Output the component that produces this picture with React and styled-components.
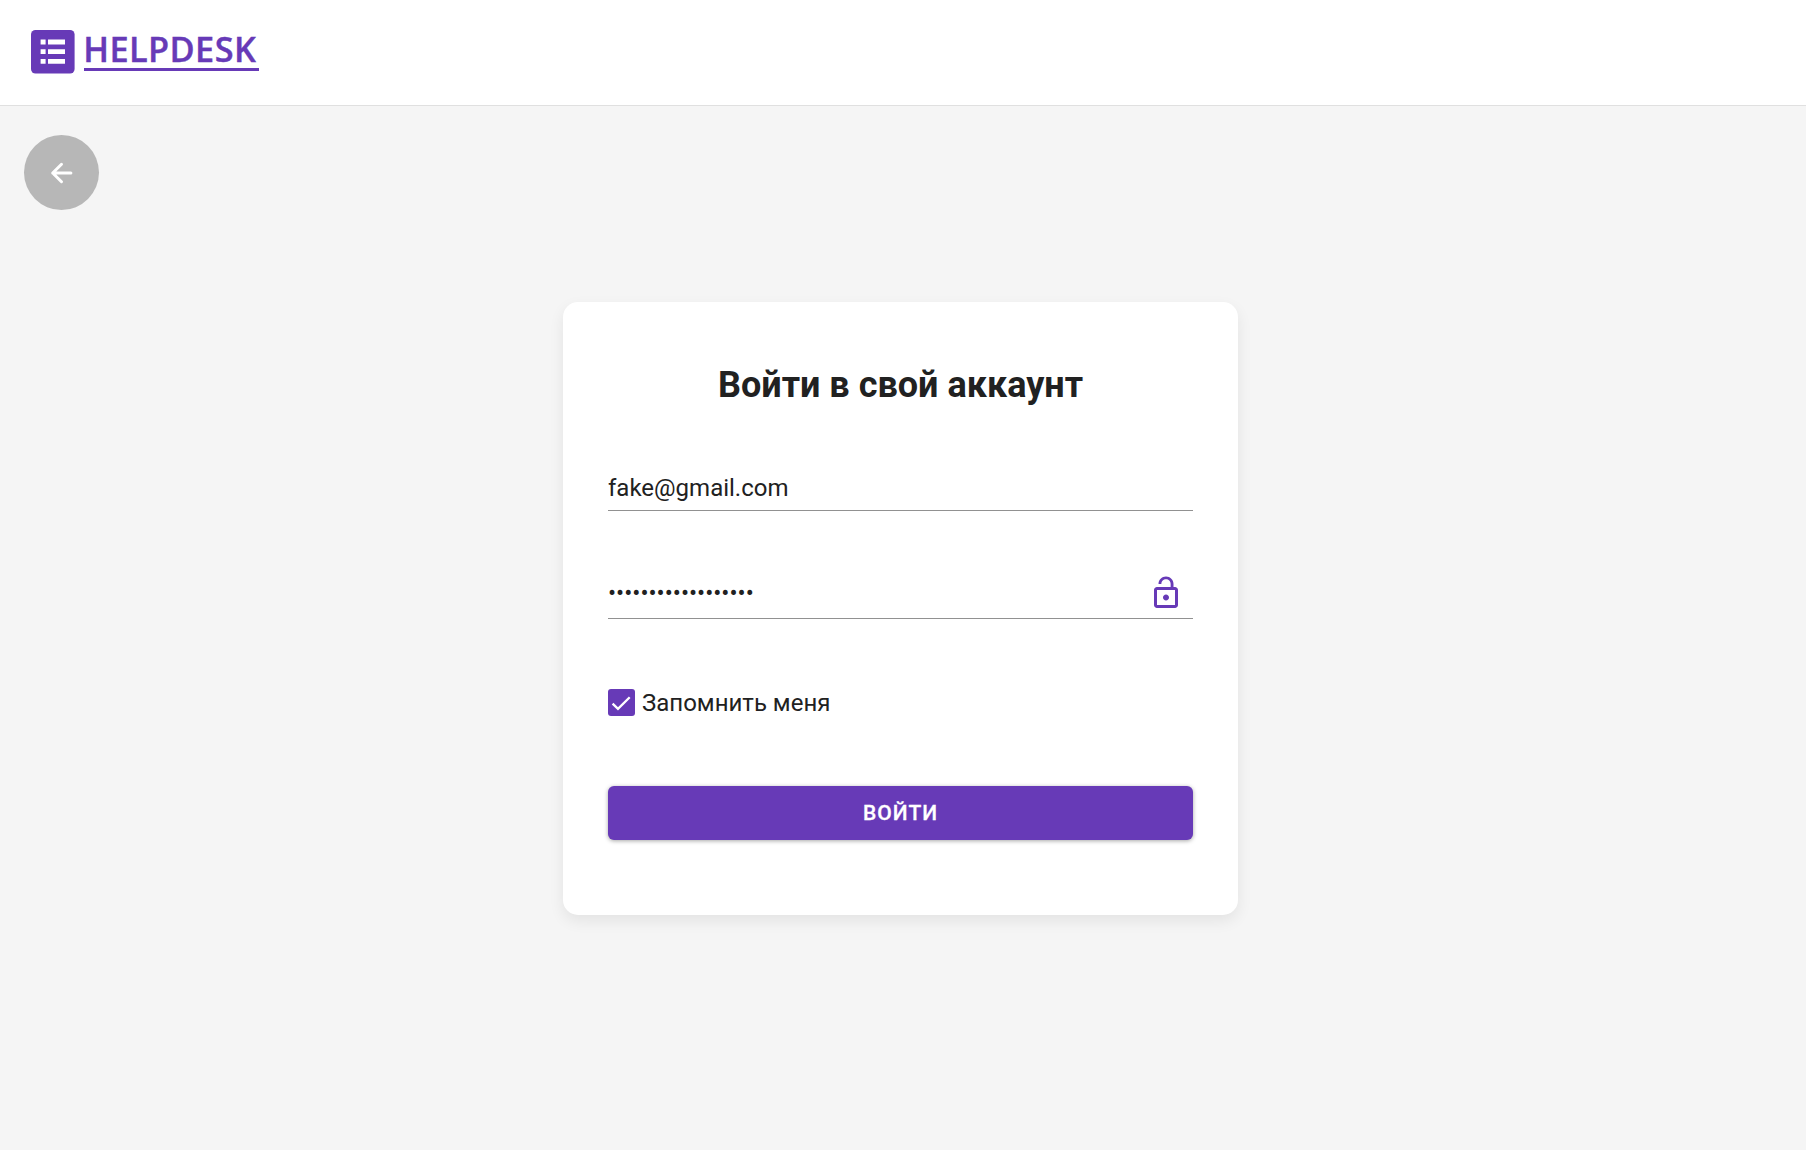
import React, { useState } from "react";
import styled, { createGlobalStyle } from "styled-components";

const PURPLE = "#673ab7";
const INK = "#212121";

const GlobalStyle = createGlobalStyle`
  *, *::before, *::after { box-sizing: border-box; }
  body {
    margin: 0;
    background: #f5f5f5;
    color: ${INK};
    font-family: Roboto, "Liberation Sans", sans-serif;
  }
`;

const Page = styled.div`
  min-height: 100vh;
  display: flex;
  flex-direction: column;
`;

const Header = styled.header`
  height: 106px;
  padding: 30px 31px 0;
  background: #fff;
  border-bottom: 1px solid #e0e0e0;
`;

const Logo = styled.a`
  display: inline-flex;
  align-items: flex-start;
  gap: 9px;
  color: ${PURPLE};
  text-decoration: none;
`;

const LogoText = styled.span`
  width: 175px;
  height: 41px;
  border-bottom: 3px solid ${PURPLE};
  font: 600 34.3px/38px "Open Sans", "Noto Sans", sans-serif;
  letter-spacing: 0.4px;
  text-indent: -0.7px;
  -webkit-text-stroke: 0.4px ${PURPLE};
  white-space: nowrap;
`;

const Main = styled.main`
  flex: 1;
  display: flex;
  flex-direction: column;
  padding: 29px 24px 0;
`;

const BackButton = styled.button`
  width: 75px;
  height: 75px;
  padding: 0;
  border: 0;
  border-radius: 50%;
  background: #b7b7b7;
  display: grid;
  place-items: center;
`;

const Card = styled.form`
  width: 675px;
  height: 613px;
  margin: 92px 0 0 539px;
  padding: 60px 45px 0;
  display: flex;
  flex-direction: column;
  background: #fff;
  border-radius: 15px;
  box-shadow: 0 6px 15px rgba(0, 0, 0, 0.075);
`;

const Title = styled.h1`
  margin: 0;
  padding-top: 2px;
  font-size: 36px;
  line-height: 42px;
  height: 44px;
  font-weight: 700;
  text-align: center;
`;

const Field = styled.div`
  display: flex;
  align-items: center;
  height: ${(p) => p.$height}px;
  margin-top: ${(p) => p.$gap}px;
  padding-top: ${(p) => p.$inset || 0}px;
  border-bottom: 1px solid #919191;
`;

const Input = styled.input`
  flex: 1;
  min-width: 0;
  padding: 0;
  border: 0;
  outline: 0;
  background: none;
  color: ${INK};
  font: 400 24px/30px Roboto, sans-serif;
`;

const LockButton = styled.button`
  width: 36px;
  height: 36px;
  margin: 0 9px 0 0;
  padding: 0;
  border: 0;
  background: none;
  color: ${PURPLE};
  svg { display: block; }
`;

const Remember = styled.label`
  display: flex;
  align-items: center;
  gap: 7px;
  height: 27px;
  margin-top: 70px;
  font-size: 24px;
`;

const CheckMark = styled.span`
  width: 27px;
  height: 27px;
  border-radius: 3px;
  background: ${PURPLE};
`;

const Submit = styled.button`
  height: 54px;
  margin-top: 70px;
  padding: 0;
  border: 0;
  border-radius: 6px;
  background: ${PURPLE};
  color: #fff;
  font: 500 21px/54px Roboto, sans-serif;
  letter-spacing: 1px;
  -webkit-text-stroke: 0.3px #fff;
  text-transform: uppercase;
  box-shadow: 0 1px 4px rgba(0, 0, 0, 0.35);
`;

export default function App() {
  const [email, setEmail] = useState("fake@gmail.com");
  const [password, setPassword] = useState("passwordpassword12");
  return (
    <Page>
      <GlobalStyle />
      <Header>
        <Logo>
          <svg width="44" height="44" viewBox="0 0 44 44">
            <rect width="43.6" height="43.6" rx="4.5" fill={PURPLE} />
            <path
              fill="#fff"
              d="M9.6 9.5h5v5h-5zM17 9.5h17v5H17zM9.6 19.2h5v4.8h-5zM17 19.2h17v4.8H17zM9.6 28.9h5v4.8h-5zM17 28.9h17v4.8H17z"
            />
          </svg>
          <LogoText>HELPDESK</LogoText>
        </Logo>
      </Header>
      <Main>
        <BackButton type="button" aria-label="Назад">
          <svg width="36" height="36" viewBox="0 0 36 36" fill="none">
            <path
              d="M26.9 18H8.7M17.5 9.3 8.7 18l8.8 8.7"
              stroke="#fff"
              strokeWidth="3"
              strokeLinecap="round"
              strokeLinejoin="round"
            />
          </svg>
        </BackButton>
        <Card onSubmit={(e) => e.preventDefault()}>
          <Title>Войти в свой аккаунт</Title>
          <Field $height={45} $gap={60}>
            <Input value={email} onChange={(e) => setEmail(e.target.value)} />
          </Field>
          <Field $height={53} $gap={55} $inset={2}>
            <Input
              type="password"
              value={password}
              onChange={(e) => setPassword(e.target.value)}
            />
            <LockButton type="button" aria-label="Показать пароль">
              <svg width="36" height="36" viewBox="0 0 24 24" fill="currentColor">
                <path d="M12 17c1.1 0 2-.9 2-2s-.9-2-2-2-2 .9-2 2 .9 2 2 2zm6-9h-1V6c0-2.76-2.24-5-5-5S7 3.24 7 6h1.9c0-1.71 1.39-3.1 3.1-3.1s3.1 1.39 3.1 3.1v2H6c-1.1 0-2 .9-2 2v10c0 1.1.9 2 2 2h12c1.1 0 2-.9 2-2V10c0-1.1-.9-2-2-2zm0 12H6V10h12v10z" />
              </svg>
            </LockButton>
          </Field>
          <Remember>
            <CheckMark>
              <svg width="27" height="27" viewBox="0 0 27 27" fill="none">
                <path d="M4.6 14.6 10 19.9 21.7 8.3" stroke="#fff" strokeWidth="2.3" />
              </svg>
            </CheckMark>
            Запомнить меня
          </Remember>
          <Submit type="submit">Войти</Submit>
        </Card>
      </Main>
    </Page>
  );
}
